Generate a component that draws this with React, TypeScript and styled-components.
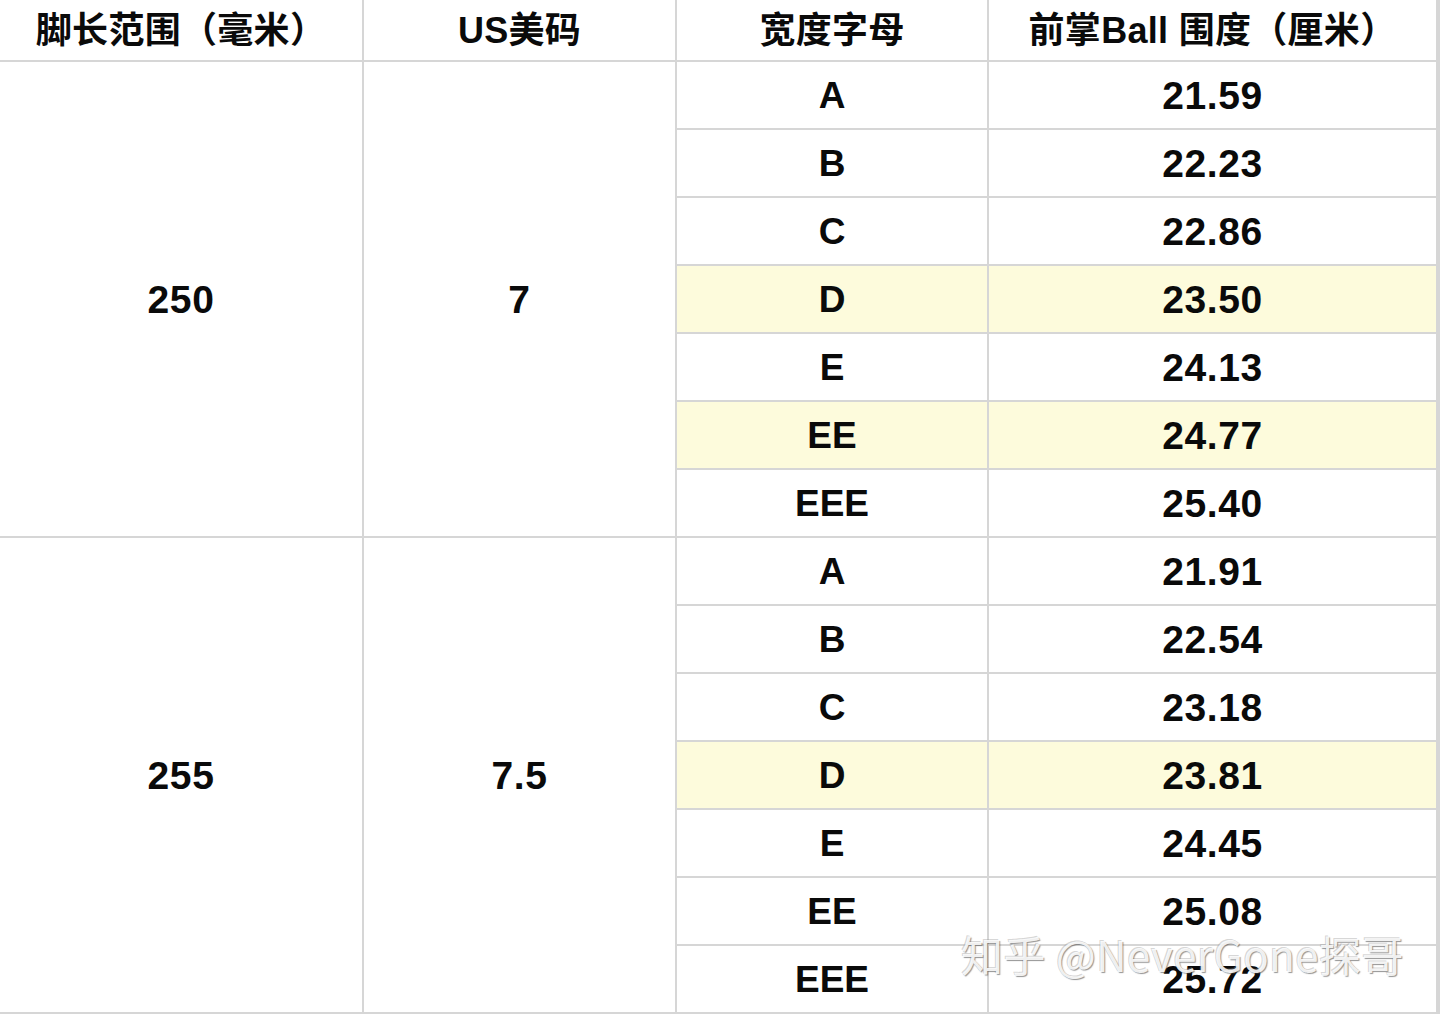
import React from "react";
import styled, { createGlobalStyle } from "styled-components";

const Global = createGlobalStyle`
  html, body { margin: 0; padding: 0; background: #ffffff; }
  body { font-family: "Liberation Sans", "Noto Sans CJK SC", sans-serif; }
`;

const Page = styled.div`
  position: relative;
  width: 1440px;
  height: 1015px;
  overflow: hidden;
  background: #ffffff;
`;

const Grid = styled.div`
  display: grid;
  width: 1438px;
  grid-template-columns: 362px 311px 310px 447px;
  grid-template-rows: 60px repeat(14, 66px);
  gap: 2px;
  padding: 0 2px 2px 0;
  background: #d6d6d6;
`;

const Cell = styled.div<{ $hl?: boolean; $span?: number; $num?: boolean }>`
  display: flex;
  align-items: center;
  justify-content: center;
  background: ${(p) => (p.$hl ? "#fdfbdc" : "#ffffff")};
  color: #0a0a0a;
  font-family: "Liberation Sans", "Noto Sans CJK SC", sans-serif;
  font-weight: 700;
  font-size: ${(p) => (p.$num ? "39px" : "37px")};
  letter-spacing: ${(p) => (p.$num ? "0.6px" : "0")};
  padding-top: 2px;
  box-sizing: border-box;
  ${(p) => (p.$span ? `grid-row: span ${p.$span};` : "")}
`;

const HeadCell = styled(Cell)`
  font-size: 36px;
  letter-spacing: 0.3px;
  padding-top: 0;
  padding-bottom: 7px;
`;

const Watermark = styled.div`
  position: absolute;
  left: 961px;
  top: 933px;
  font-family: "Noto Sans CJK SC", "Liberation Sans", sans-serif;
  font-size: 42px;
  font-weight: 400;
  line-height: 42px;
  color: rgba(255, 255, 255, 0.9);
  text-shadow: 1px 1px 1px rgba(60, 60, 60, 0.55), -1px -1px 0 rgba(150, 150, 150, 0.4);
  white-space: nowrap;
  letter-spacing: 0.5px;
`;

type Group = { len: string; us: string; rows: { w: string; v: string; hl?: boolean }[] };

const groups: Group[] = [
  {
    len: "250",
    us: "7",
    rows: [
      { w: "A", v: "21.59" },
      { w: "B", v: "22.23" },
      { w: "C", v: "22.86" },
      { w: "D", v: "23.50", hl: true },
      { w: "E", v: "24.13" },
      { w: "EE", v: "24.77", hl: true },
      { w: "EEE", v: "25.40" },
    ],
  },
  {
    len: "255",
    us: "7.5",
    rows: [
      { w: "A", v: "21.91" },
      { w: "B", v: "22.54" },
      { w: "C", v: "23.18" },
      { w: "D", v: "23.81", hl: true },
      { w: "E", v: "24.45" },
      { w: "EE", v: "25.08" },
      { w: "EEE", v: "25.72" },
    ],
  },
];

export default function App() {
  return (
    <Page>
      <Global />
      <Grid>
        <HeadCell>脚长范围（毫米）</HeadCell>
        <HeadCell>US美码</HeadCell>
        <HeadCell>宽度字母</HeadCell>
        <HeadCell>前掌Ball 围度（厘米）</HeadCell>
        {groups.map((g) => (
          <React.Fragment key={g.len}>
            <Cell $num $span={7} style={{ gridColumn: 1 }}>{g.len}</Cell>
            <Cell $num $span={7} style={{ gridColumn: 2 }}>{g.us}</Cell>
            {g.rows.map((r) => (
              <React.Fragment key={g.len + r.w}>
                <Cell $hl={r.hl} style={{ gridColumn: 3 }}>{r.w}</Cell>
                <Cell $num $hl={r.hl} style={{ gridColumn: 4 }}>{r.v}</Cell>
              </React.Fragment>
            ))}
          </React.Fragment>
        ))}
      </Grid>
      <Watermark>知乎 @NeverGone探哥</Watermark>
    </Page>
  );
}
